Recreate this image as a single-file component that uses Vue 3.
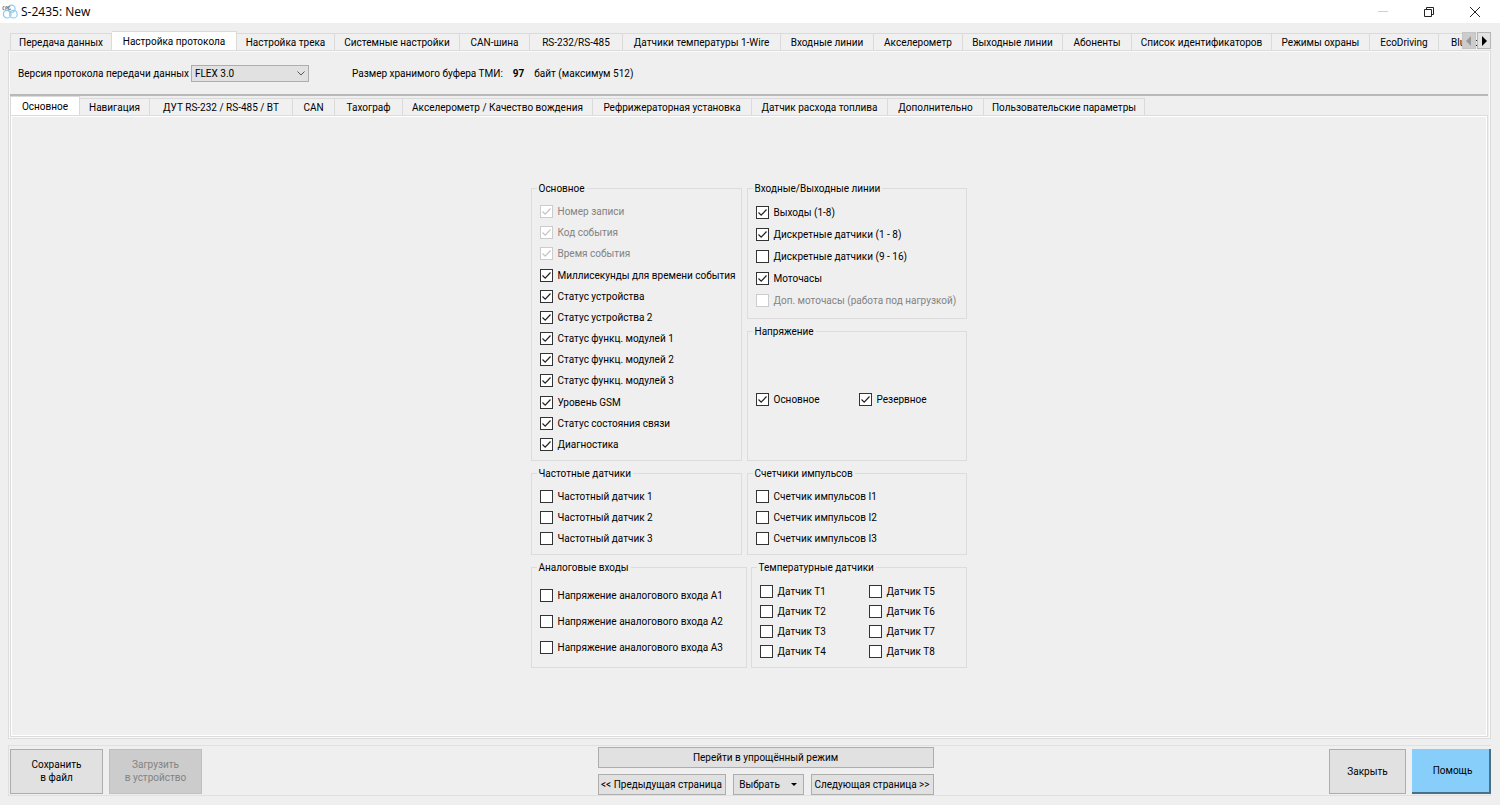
<script setup>
import { reactive, ref } from 'vue'

const mainTabs = [
  'Передача данных', 'Настройка протокола', 'Настройка трека', 'Системные настройки', 'CAN-шина',
  'RS-232/RS-485', 'Датчики температуры 1-Wire', 'Входные линии', 'Акселерометр', 'Выходные линии',
  'Абоненты', 'Список идентификаторов', 'Режимы охраны', 'EcoDriving', 'Bluetooth',
]
const subTabs = [
  'Основное', 'Навигация', 'ДУТ RS-232 / RS-485 / BT', 'CAN', 'Тахограф', 'Акселерометр / Качество вождения',
  'Рефрижераторная установка', 'Датчик расхода топлива', 'Дополнительно', 'Пользовательские параметры',
]
const activeMain = ref(1)
const activeSub = ref(0)
const version = ref('FLEX 3.0')

const item = (label, on = false, disabled = false) => ({ label, on, disabled })
const groups = reactive([
  { key: 'main', title: 'Основное', items: [
    item('Номер записи', true, true), item('Код события', true, true), item('Время события', true, true),
    item('Миллисекунды для времени события', true), item('Статус устройства', true), item('Статус устройства 2', true),
    item('Статус функц. модулей 1', true), item('Статус функц. модулей 2', true), item('Статус функц. модулей 3', true),
    item('Уровень GSM', true), item('Статус состояния связи', true), item('Диагностика', true),
  ] },
  { key: 'lines', title: 'Входные/Выходные линии', items: [
    item('Выходы (1-8)', true), item('Дискретные датчики (1 - 8)', true), item('Дискретные датчики (9 - 16)'),
    item('Моточасы', true), item('Доп. моточасы (работа под нагрузкой)', false, true),
  ] },
  { key: 'voltage', title: 'Напряжение', items: [item('Основное', true), item('Резервное', true)] },
  { key: 'freq', title: 'Частотные датчики', items: [1, 2, 3].map(n => item(`Частотный датчик ${n}`)) },
  { key: 'pulse', title: 'Счетчики импульсов', items: [1, 2, 3].map(n => item(`Счетчик импульсов I${n}`)) },
  { key: 'analog', title: 'Аналоговые входы', items: [1, 2, 3].map(n => item(`Напряжение аналогового входа A${n}`)) },
  { key: 'temp', title: 'Температурные датчики', items: [1, 2, 3, 4, 5, 6, 7, 8].map(n => item(`Датчик T${n}`)) },
])
</script>

<template>
  <div class="window">
    <header class="titlebar">
      <svg class="logo" width="16" height="16" viewBox="0 0 16 16" fill="none">
        <g stroke="#8ccbee" stroke-width="1.2">
          <circle cx="9.500" cy="4.800" r="3.600" />
          <circle cx="5.200" cy="10.200" r="3.800" />
          <circle cx="11.400" cy="10.200" r="3.800" />
        </g>
        <path d="M2.500 2.700H1v3h1.500M3.800 5.900V2.700H5.400v1.500H4M8.300 2.700H6.700v3h1.600V4.500" stroke="#777" stroke-width=".9" />
      </svg>
      <h1>S-2435: New</h1>
      <div class="controls">
        <button aria-label="Свернуть" disabled>
          <svg width="12" height="12" viewBox="0 0 12 12"><path d="M1 5.500h10" stroke="#d0d0d0" /></svg>
        </button>
        <button aria-label="Восстановить">
          <svg width="12" height="12" viewBox="0 0 12 12" fill="none" stroke="#222"><path d="M1.500 3.500h7v7h-7zM3.500 3.500v-2h7v7h-2" /></svg>
        </button>
        <button aria-label="Закрыть окно">
          <svg width="12" height="12" viewBox="0 0 12 12" fill="none" stroke="#222"><path d="M1 1l10 10M11 1L1 11" /></svg>
        </button>
      </div>
    </header>

    <main class="body">
      <div class="strip">
        <div class="tabs tabs-main" role="tablist">
          <button v-for="(t, i) in mainTabs" :key="t" role="tab" :aria-selected="i === activeMain" @click="activeMain = i">{{ t }}</button>
        </div>
        <div class="scroller">
          <button disabled aria-label="Назад"><svg width="6" height="10" viewBox="0 0 6 10"><path d="M5 0v10L0 5z" fill="#999" /></svg></button>
          <button aria-label="Вперёд"><svg width="6" height="10" viewBox="0 0 6 10"><path d="M1 0v10l5-5z" fill="#000" /></svg></button>
        </div>
      </div>

      <section class="pane">
        <div class="settings">
          <label for="version">Версия протокола передачи данных</label>
          <span class="select">
            <select id="version" v-model="version"><option>FLEX 3.0</option></select>
            <svg width="8" height="5" viewBox="0 0 8 5"><path d="M.5.5L4 4 7.500.5" fill="none" stroke="#555" /></svg>
          </span>
          <span class="buffer">Размер хранимого буфера ТМИ:</span>
          <strong>97</strong>
          <span>байт (максимум 512)</span>
        </div>
        <div class="tabs tabs-sub" role="tablist">
          <button v-for="(t, i) in subTabs" :key="t" role="tab" :aria-selected="i === activeSub" @click="activeSub = i">{{ t }}</button>
        </div>
        <div class="subpane">
          <div class="groups">
            <fieldset v-for="g in groups" :key="g.key" :class="g.key">
              <legend>{{ g.title }}</legend>
              <div class="items">
                <label v-for="it in g.items" :key="it.label" :class="{ off: it.disabled }">
                  <span class="box">
                    <input v-model="it.on" type="checkbox" :disabled="it.disabled" />
                    <svg width="13" height="13" viewBox="0 0 13 13"><path d="M2.500 6.500l2.700 2.700 5.300-5.700" fill="none" stroke="currentColor" stroke-width="1.200" /></svg>
                  </span>
                  <span>{{ it.label }}</span>
                </label>
              </div>
            </fieldset>
          </div>
        </div>
      </section>

      <footer class="footer">
        <div class="side">
          <button class="big file">Сохранить<br />в файл</button>
          <button class="big file" disabled>Загрузить<br />в устройство</button>
        </div>
        <div class="nav">
          <button class="mode">Перейти в упрощённый режим</button>
          <button>&lt;&lt; Предыдущая страница</button>
          <button class="choose">Выбрать <svg width="6" height="3" viewBox="0 0 6 3"><path d="M0 0h6L3 3z" /></svg></button>
          <button>Следующая страница &gt;&gt;</button>
        </div>
        <div class="side">
          <button class="big close">Закрыть</button>
          <button class="big help">Помощь</button>
        </div>
      </footer>
    </main>
  </div>
</template>

<style>
body { background: #efefef; }
</style>

<style scoped>
* { box-sizing: border-box; }
.window {
  display: flex; flex-direction: column; min-height: 100vh;
  background: #efefef; color: #000;
  font-family: Roboto, "DejaVu Sans Condensed", sans-serif; font-size: 10px; line-height: 13px;
}
button, select, input { font: inherit; color: inherit; margin: 0; }
button { padding: 0; border: 0; white-space: nowrap; }
svg { flex: none; }

.titlebar { display: flex; align-items: center; height: 23px; padding-left: 2px; background: #fff; }
.titlebar h1 { margin: 0 auto 0 3px; font: 400 12px/16px "Open Sans", "Noto Sans", sans-serif; }
.controls { display: flex; padding-right: 2px; }
.controls button { display: grid; place-items: center; width: 46px; height: 23px; background: none; }

.body { display: flex; flex-direction: column; flex: 1; padding: 8px 9px 9px 8px; }
.strip { position: relative; }
.tabs { display: grid; align-items: end; overflow: hidden; }
.tabs button {
  height: 17px; overflow: hidden; background: #f0f0f0;
  border: 1px solid #dadada; border-width: 1px 1px 0 0;
}
.tabs button:first-child { border-left-width: 1px; }
.tabs button[aria-selected="true"] { background: #fff; height: 19px; }
.tabs-main {
  padding-left: 2px;
  grid-template-columns: 102px 125px 98px 125px 70px 93px 158px 93px 89px 100px 69px 140px 98px 69px 1fr;
}
.tabs-main button:last-child { padding-left: 12px; overflow: visible; text-align: left; border-right: 0; }
.tabs-sub {
  grid-template-columns: 70px 70px 143px 42px 68px 190px 159px 136px 96px 161px;
}
.scroller { position: absolute; right: 0; top: 1px; display: flex; gap: 1px; }
.scroller button { display: grid; place-items: center; width: 14px; height: 17px; border: 1px solid #b5b5b5; background: #e3e3e3; }
.scroller button:disabled { background: #ccc; border-color: #c4c4c4; }

.pane {
  display: flex; flex-direction: column; flex: 1; padding: 0 2px 1px 1px;
  border: 1px solid #dcdcdc; box-shadow: inset 0 0 0 1px #fafafa;
}
.settings {
  display: flex; align-items: center; height: 45px; padding: 1px 0 0 8px;
  border-bottom: 2px solid #b8b8b8;
}
.select { position: relative; margin-left: 2px; }
.select select {
  display: block; appearance: none; width: 118px; height: 17px; padding: 0 3px;
  border: 1px solid #adadad; border-radius: 0; background: #e1e1e1;
}
.select svg { position: absolute; right: 4px; top: 6px; pointer-events: none; }
.buffer { margin-left: 43px; }
.settings strong { margin: 0 10px; }
.subpane {
  flex: 1; display: grid; place-items: center; padding: 0 1px 2px 0;
  border: 1px solid #dcdcdc; box-shadow: inset 0 0 0 1px #fff;
}

.groups {
  display: grid; row-gap: 6px;
  grid-template-columns: 211px 5px 4px 216px;
  grid-template-rows: 137px 136px auto auto;
}
fieldset {
  display: flex; flex-direction: column; min-width: 0; margin: 0; padding: 0 8px;
  border: 1px solid #dcdcdc;
}
legend { margin-left: -3px; padding: 0 2px; height: 13px; }
.main { grid-column: 1; grid-row: 1 / 3; }
.lines { grid-column: 3 / 5; grid-row: 1; }
.voltage { grid-column: 3 / 5; grid-row: 2; }
.freq { grid-column: 1; grid-row: 3; }
.pulse { grid-column: 3 / 5; grid-row: 3; }
.analog { grid-column: 1 / 3; grid-row: 4; }
.temp { grid-column: 4; grid-row: 4; }
.items { display: grid; grid-auto-rows: 21px; padding: 6px 0 5px; align-items: center; }
.main .items { flex: 1; align-content: space-between; }
.lines .items { grid-auto-rows: 22px; }
.voltage .items { flex: 1; grid-template-columns: 103px 1fr; grid-auto-rows: auto; }
.analog .items { grid-auto-rows: 26px; padding: 8px 0 7px; }
.temp .items { grid-auto-flow: column; grid-template: repeat(4, 20px) / 109px 1fr; padding-top: 7px; }
.items label { display: flex; align-items: center; gap: 5px; white-space: nowrap; }
.items .off { color: #838383; }
.box { position: relative; width: 13px; height: 13px; color: #222; }
.box input { display: block; appearance: none; width: 13px; height: 13px; border: 1px solid #333; background: #fff; }
.box input:disabled { border-color: #ccc; }
.box svg { position: absolute; inset: 0; visibility: hidden; pointer-events: none; }
.box input:checked + svg { visibility: visible; }
.off .box { color: #c4c4c4; }

.footer {
  display: flex; justify-content: space-between; align-items: center;
  margin-top: 6px; padding: 1px 0 0 1px; border: 1px solid #e0e0e0; border-right: 0;
}
.side { display: flex; gap: 6px; }
.footer button { height: 21px; border: 1px solid #adadad; background: #e1e1e1; }
.footer .big { height: 45px; }
.footer .file { width: 93px; }
.footer button:disabled { background: #ccc; border-color: #bfbfbf; color: #838383; }
.nav { display: grid; grid-template-columns: 128px 71px 123px; gap: 6px 7px; }
.nav .mode { grid-column: 1 / 4; }
.choose { display: flex; align-items: center; justify-content: center; gap: 11px; }
.footer .close { width: 77px; }
.footer .help { width: 79px; padding-left: 4px; background: #87cefa; border-width: 0 2px 2px 0; border-color: #4a7088; }
</style>
